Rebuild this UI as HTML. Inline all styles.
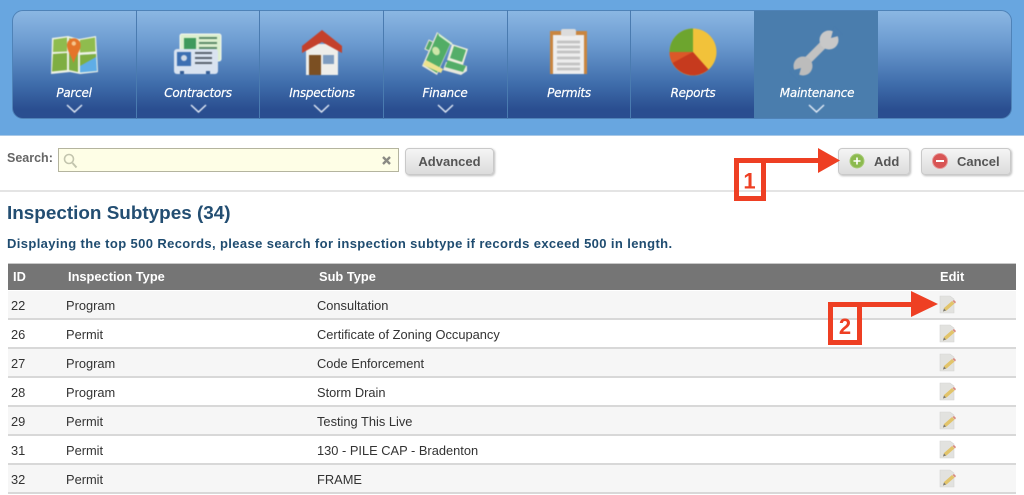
<!DOCTYPE html>
<html><head><meta charset="utf-8">
<style>
*{box-sizing:border-box}
html,body{margin:0;padding:0;width:1024px;height:495px;overflow:hidden;background:#fff;font-family:"Liberation Sans",sans-serif}
.a{position:absolute;white-space:nowrap}
#top{left:0;top:0;width:1024px;height:136px;background:#68a6e0;border-bottom:1px solid #a9c8e6}
#nav{left:12px;top:10px;width:1000px;height:109px;border-radius:11px;border:1px solid #4f83b8;background:linear-gradient(#8bb7e3 0,#6c9bd0 30%,#3f6dab 68%,#2a4e90 92%,#2a4e90 100%);overflow:hidden}
.d{top:10px;width:1px;height:109px;background:#4a7bb0}
#act{left:754px;top:11px;width:124px;height:107px;background:#4a7dad}
.n{top:86px;width:124px;text-align:center;color:#fff;font:italic 12px/15px "DejaVu Sans",sans-serif;letter-spacing:-.25px;-webkit-text-stroke:.2px #fff}
.btn{top:148px;height:27px;border:1px solid #c9c9c9;border-radius:4px;background:linear-gradient(#f5f5f5,#dcdcdc);box-shadow:1px 1px 2px #bbb;color:#555;font:bold 13px/25px "Liberation Sans",sans-serif}
.row{left:8px;width:1008px;height:29px;border-bottom:2px solid #d8d8d8}
.t{font-size:12.850px;line-height:16px;color:#333;margin-top:.5px}
.h{top:269px;font-size:12.850px;line-height:16px;font-weight:bold;color:#fff}
</style></head><body>
<div class="a" id="top"></div>
<div class="a" id="nav"></div>
<div class="a" id="act"></div>
<div class="a d" style="left:136px"></div><div class="a d" style="left:259px"></div><div class="a d" style="left:383px"></div><div class="a d" style="left:507px"></div><div class="a d" style="left:630px"></div>

<div class="a n" style="left:12px">Parcel</div>
<div class="a n" style="left:136px">Contractors</div>
<div class="a n" style="left:260px">Inspections</div>
<div class="a n" style="left:383px">Finance</div>
<div class="a n" style="left:507px">Permits</div>
<div class="a n" style="left:631px">Reports</div>
<div class="a n" style="left:755px">Maintenance</div>

<svg class="a" style="left:0;top:0;filter:blur(.45px)" width="1024" height="136" viewBox="0 0 1024 136">
<g fill="none" stroke="#e6eef8" stroke-width="1.400">
<path d="M67 105l7.500 7 7.500-7M191 105l7.500 7 7.500-7M314 105l7.500 7 7.500-7M438 105l7.500 7 7.500-7M809 105l7.500 7 7.500-7"/>
</g>
<!-- parcel -->
<path d="M52 38l16-2 11 3 17-3 2 36-18 2-10-2-19 2z" fill="#eef2e6"/>
<path d="M53.500 39.500l13.500-2 0 14-14 .5zM69 38l9 2v11l-9 0zM80 40l15-2.500 .5 14-15.500 1z" fill="#8fbc4e"/>
<path d="M53 54l14-1 0 17-15 1.500zM69 53h9l0 19-9-2z" fill="#7fae42"/>
<path d="M80 55l16-1 1 17-17 1.500z" fill="#5fade6"/>
<path d="M80 55l16-1 0 3-16 9z" fill="#7fae42"/>
<path d="M73.500 63c-2.500-8-6.500-12-6.500-18a6.800 6.800 0 0 1 13.600 0c0 6-4.500 10-7.100 18z" fill="#e4752a"/>
<circle cx="73.800" cy="43.500" r="2.200" fill="#f6c68e"/>
<!-- contractors -->
<rect x="180" y="34" width="41" height="27" rx="2" fill="#dcefcf" stroke="#f4f8ee"/>
<rect x="184" y="38" width="12" height="11" fill="#3f9a5c"/>
<path d="M199 38h18M199 43h18M199 48h18" stroke="#5d8c69" stroke-width="2"/>
<rect x="174" y="49" width="44" height="25" rx="3" fill="#d9e3f0"/>
<rect x="177" y="52" width="14" height="14" fill="#3d6fb2"/><circle cx="184" cy="58" r="3" fill="#cfd9e6"/>
<path d="M195 53h17M195 58h17M195 63h17" stroke="#59636f" stroke-width="2"/>
<path d="M180 74h4v-3h-4zM206 74h4v-3h-4z" fill="#345d96"/>
<!-- inspections -->
<path d="M306 44h32v31h-32z" fill="#eeeeea"/>
<path d="M302 53v-7l20-16 20 16v7l-20-11z" fill="#c4402b"/>
<rect x="309" y="55" width="12" height="20" fill="#7b4f22"/>
<rect x="323" y="55" width="11" height="9" fill="#7d9cc0"/>
<!-- finance -->
<path d="M425 49l4-9 6 3-4 9z" fill="#52a866" stroke="#e6e6d8"/>
<path d="M446 62l7 0 14 4 0 5-6 4-18-5z" fill="#e8e8dc"/>
<path d="M448 60l18 6-3 6-18-5z" fill="#53ad68"/>
<path d="M452 44l16 5-5 16-16-5z" fill="#eeeedd"/>
<path d="M454 46l12 4-4 12-12-4z" fill="#55ae69"/>
<path d="M422 66l15-34 15 11-2 2-13 30z" fill="#e8e6da"/>
<path d="M424 65l14-32 13 9-14 31z" fill="#52ad66"/>
<path d="M426 60l17 9-2 4-18-8z" fill="#ece28e"/>
<path d="M438 33l14 10 1 3-14-10z" fill="#dff0d8"/>
<ellipse cx="436" cy="51" rx="4.500" ry="3.500" fill="#cde6a8" transform="rotate(60 436 51)"/>
<!-- permits -->
<rect x="550" y="31" width="37" height="43" fill="#c9853f"/>
<rect x="553" y="35" width="31" height="39" fill="#eeeeee"/>
<rect x="561" y="29" width="15" height="7" rx="2" fill="#dcdcdc"/>
<path d="M557 42h23M557 47h23M557 52h23M557 58h23M557 64h23M557 69h23" stroke="#c2c2c2" stroke-width="2.800"/>
<!-- reports -->
<circle cx="693" cy="52" r="23.500" fill="#f2c23a"/>
<path d="M693 52V28.500a23.500 23.500 0 0 0-23.500 23.500z" fill="#6da52e"/>
<path d="M693 52h-23.500a23.500 23.500 0 0 0 39 17.500z" fill="#c63a1e"/>
<path d="M693 52h-23.500c0 4 1 8 3 11l11-6z" fill="#e0602a" opacity=".8"/>
<!-- wrench -->
<path d="M803 65l26-26" stroke="#c2c2c2" stroke-width="8"/>
<circle cx="829" cy="40" r="9.500" fill="#c8c8c8"/>
<circle cx="803" cy="66" r="9.500" fill="#bcbcbc"/>
<path d="M831 38l3-11 8 8-11 3z" fill="#4a7dad"/>
<path d="M801 68l-11 3 8 8 3-11z" fill="#4a7dad"/>
</svg>

<div class="a" style="left:7px;top:151px;font:bold 12.500px/14px 'Liberation Sans',sans-serif;color:#666">Search:</div>
<div class="a" style="left:58px;top:148px;width:341px;height:24px;background:#fefee6;border:1px solid #b4b49f"></div>
<svg class="a" style="left:58px;top:148px" width="342" height="24">
<circle cx="11" cy="11" r="4.500" fill="none" stroke="#c3c5ae" stroke-width="1.600"/><path d="M14.500 15l4 4.500" stroke="#c3c5ae" stroke-width="2"/>
<path d="M325 9l7 7m0-7l-7 7" stroke="#8b8b84" stroke-width="2.400"/>
</svg>
<div class="a btn" style="left:405px;width:89px;text-align:center">Advanced</div>
<div class="a btn" style="left:838px;width:72px;padding-left:35px">Add</div>
<div class="a btn" style="left:921px;width:90px;padding-left:35px">Cancel</div>
<svg class="a" style="left:845px;top:150px" width="170" height="22">
<circle cx="12" cy="11" r="7" fill="#8cba4f" stroke="#a9cc7a"/><path d="M8.500 11h7M12 7.500v7" stroke="#fff" stroke-width="1.600"/>
<circle cx="95" cy="11" r="7.500" fill="#d85555" stroke="#e79a9a"/><path d="M91 11h8" stroke="#fff" stroke-width="2"/>
</svg>
<div class="a" style="left:0;top:190px;width:1024px;height:2px;background:#e4e4e4"></div>

<div class="a" style="left:7px;top:203px;font:bold 18.900px/21px 'Liberation Sans',sans-serif;color:#234e72">Inspection Subtypes (34)</div>
<div class="a" style="left:7px;top:236px;font:bold 13px/15px 'Liberation Sans',sans-serif;color:#1f4c70;letter-spacing:.38px">Displaying the top 500 Records, please search for inspection subtype if records exceed 500 in length.</div>

<div class="a" style="left:8px;top:263px;width:1008px;height:27px;background:#757575;border-top:1px solid #c8c8c8"></div>
<div class="a h" style="left:13px">ID</div><div class="a h" style="left:68px">Inspection Type</div><div class="a h" style="left:319px">Sub Type</div><div class="a h" style="left:940px">Edit</div>

<div class="a row" style="top:291px;background:#f6f6f6"></div>
<div class="a row" style="top:320px"></div>
<div class="a row" style="top:349px;background:#f6f6f6"></div>
<div class="a row" style="top:378px"></div>
<div class="a row" style="top:407px;background:#f6f6f6"></div>
<div class="a row" style="top:436px"></div>
<div class="a row" style="top:465px;background:#f6f6f6"></div>

<div class="a t" style="left:11px;top:297px">22</div><div class="a t" style="left:66px;top:297px">Program</div><div class="a t" style="left:317px;top:297px">Consultation</div>
<div class="a t" style="left:11px;top:326px">26</div><div class="a t" style="left:66px;top:326px">Permit</div><div class="a t" style="left:317px;top:326px">Certificate of Zoning Occupancy</div>
<div class="a t" style="left:11px;top:355px">27</div><div class="a t" style="left:66px;top:355px">Program</div><div class="a t" style="left:317px;top:355px">Code Enforcement</div>
<div class="a t" style="left:11px;top:384px">28</div><div class="a t" style="left:66px;top:384px">Program</div><div class="a t" style="left:317px;top:384px">Storm Drain</div>
<div class="a t" style="left:11px;top:413px">29</div><div class="a t" style="left:66px;top:413px">Permit</div><div class="a t" style="left:317px;top:413px">Testing This Live</div>
<div class="a t" style="left:11px;top:442px">31</div><div class="a t" style="left:66px;top:442px">Permit</div><div class="a t" style="left:317px;top:442px">130 - PILE CAP - Bradenton</div>
<div class="a t" style="left:11px;top:471px">32</div><div class="a t" style="left:66px;top:471px">Permit</div><div class="a t" style="left:317px;top:471px">FRAME</div>

<svg class="a" style="left:0;top:0" width="1024" height="495" viewBox="0 0 1024 495">
<defs><g id="e"><path d="M0 0h10l4 3v14H0z" fill="#e2e2df" stroke="#d6d6d3" stroke-width=".6"/><path d="M3 15.500l1-3.500 8-7 2.500 2.500-8 7z" fill="#e2c46a"/><path d="M12.500 5l2.500 2.500 1-1.500-2-2z" fill="#d98a80"/><path d="M3 15.500l1-3 2 2z" fill="#777"/></g></defs>
<g style="filter:blur(.3px)"><use href="#e" x="940" y="296"/><use href="#e" x="940" y="325"/><use href="#e" x="940" y="354"/><use href="#e" x="940" y="383"/><use href="#e" x="940" y="412"/><use href="#e" x="940" y="441"/><use href="#e" x="940" y="470"/></g>
<g fill="#ee3f23">
<path d="M734 158h84v-10l22 12.500-22 12.500v-10h-52v38h-32zM739 163v33h22v-33z" fill-rule="evenodd"/>
<path d="M828 302h83v-11l27 13-27 13v-10h-49v38h-34zM833 307v33h24v-33z" fill-rule="evenodd"/>
</g>
<text x="749.500" y="188.500" text-anchor="middle" font-family="Liberation Sans" font-weight="bold" font-size="22" fill="#ee3f23">1</text>
<text x="845" y="334" text-anchor="middle" font-family="Liberation Sans" font-weight="bold" font-size="22" fill="#ee3f23">2</text>
</svg>
</body></html>
